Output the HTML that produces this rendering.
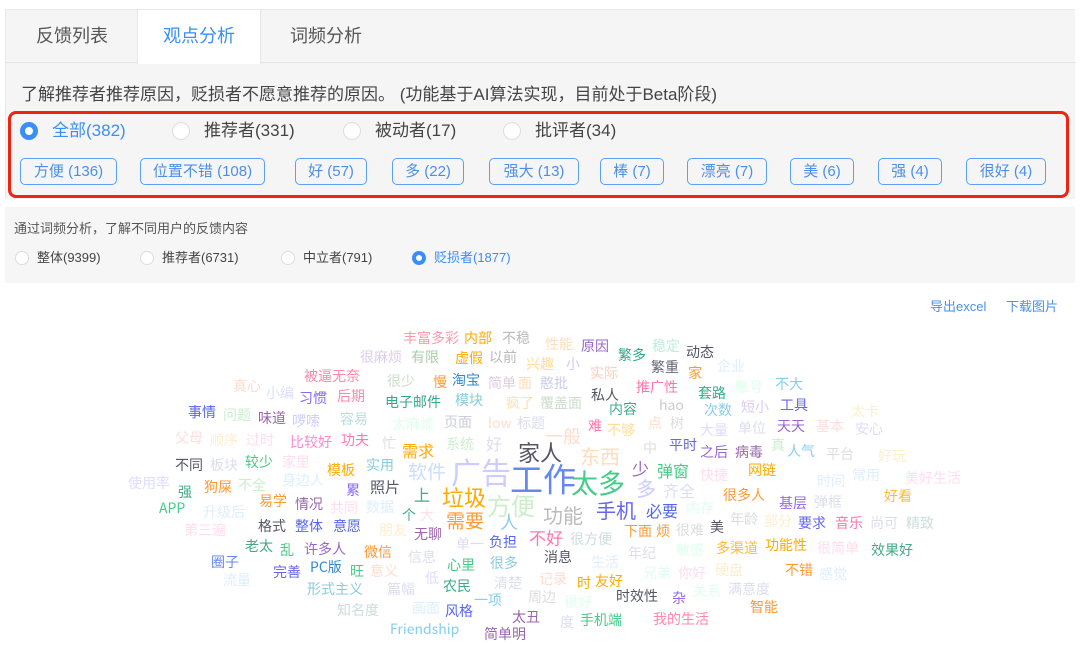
<!DOCTYPE html>
<html><head><meta charset="utf-8"><style>
*,*:before,*:after{margin:0;padding:0;box-sizing:border-box}
body{width:1080px;height:668px;background:#fff;font-family:"Liberation Sans","Noto Sans CJK SC",sans-serif;position:relative;overflow:hidden;color:#333}
.panel{position:absolute;left:5px;top:9px;width:1070px;height:190px;background:#f5f5f5;border-top:1px solid #e8e8e8;border-left:1px solid #e8e8e8}
.tabs{position:absolute;left:0;top:0;width:1070px;height:53px;border-bottom:1px solid #e6e6e6}
.tab{position:absolute;top:0;height:53px;line-height:53px;font-size:18px;color:#555;text-align:center}
.tab.act{background:#fff;color:#3a8ef6;border-left:1px solid #e6e6e6;border-right:1px solid #e6e6e6;height:54px}
.desc{position:absolute;left:15px;top:70px;font-size:17px;color:#444}
.red{position:absolute;left:8px;top:111px;width:1061px;height:87px;border:3px solid #f0230f;border-radius:8px}
.rad{position:absolute;top:121px;height:20px;font-size:17px;color:#444;line-height:20px;padding-left:32px}
.rad:before{content:"";position:absolute;left:0;top:1px;width:18px;height:18px;border:1px solid #ddd;border-radius:50%;background:#fff}
.rad.on{color:#3a8ef6}
.rad.on:before{border:5px solid #3a8ef6}
.tag{position:absolute;top:158px;height:27px;border:1px solid #5aa0f6;border-radius:5px;color:#4a90e8;font-size:15px;line-height:25px;text-align:center}
.p2{position:absolute;left:5px;top:207px;width:1070px;height:76px;background:#f6f6f6}
.p2 .t{position:absolute;left:9px;top:11px;font-size:13px;color:#555}
.r2{position:absolute;top:43px;font-size:13px;color:#444;padding-left:25px;line-height:16px}
.r2:before{content:"";position:absolute;left:3px;top:1px;width:14px;height:14px;border:1px solid #ddd;border-radius:50%;background:#fff}
.r2.on{color:#3a8ef6}.r2.on:before{border:4px solid #3a8ef6}
.lk{position:absolute;top:296px;font-size:13px;color:#4a90e8}
.c span{position:absolute;white-space:nowrap;line-height:1;font-size:14px;transform:translateY(-50%);font-family:"Noto Sans CJK SC","DejaVu Sans",sans-serif}
</style></head><body>
<div class="panel">
<div class="tabs">
<div class="tab" style="left:0;width:132px">反馈列表</div>
<div class="tab act" style="left:131px;width:124px">观点分析</div>
<div class="tab" style="left:255px;width:130px">词频分析</div>
</div>
<div class="desc">了解推荐者推荐原因，贬损者不愿意推荐的原因。 (功能基于AI算法实现，目前处于Beta阶段)</div>
</div>
<div class="red"></div>
<div class="rad on" style="left:20px">全部(382)</div>
<div class="rad" style="left:172px">推荐者(331)</div>
<div class="rad" style="left:343px">被动者(17)</div>
<div class="rad" style="left:503px">批评者(34)</div>
<div class="tag" style="left:20px;width:97px">方便 (136)</div>
<div class="tag" style="left:140px;width:125px">位置不错 (108)</div>
<div class="tag" style="left:295px;width:72px">好 (57)</div>
<div class="tag" style="left:392px;width:72px">多 (22)</div>
<div class="tag" style="left:489px;width:90px">强大 (13)</div>
<div class="tag" style="left:600px;width:64px">棒 (7)</div>
<div class="tag" style="left:687px;width:80px">漂亮 (7)</div>
<div class="tag" style="left:790px;width:64px">美 (6)</div>
<div class="tag" style="left:878px;width:64px">强 (4)</div>
<div class="tag" style="left:966px;width:80px">很好 (4)</div>
<div class="p2"><div class="t">通过词频分析，了解不同用户的反馈内容</div>
<div class="r2" style="left:7px">整体(9399)</div>
<div class="r2" style="left:132px">推荐者(6731)</div>
<div class="r2" style="left:273px">中立者(791)</div>
<div class="r2 on" style="left:404px">贬损者(1877)</div>
</div>
<div class="lk" style="left:930px">导出excel</div>
<div class="lk" style="left:1006px">下载图片</div>
<div class="c">
<span style="left:403px;top:338px;color:#f9a">丰富多彩</span>
<span style="left:464px;top:338px;color:#fa0">内部</span>
<span style="left:502px;top:338px;color:#bbb">不稳</span>
<span style="left:545px;top:344px;color:#fdb">性能</span>
<span style="left:581px;top:346px;color:#96c">原因</span>
<span style="left:618px;top:355px;color:#3a8">繁多</span>
<span style="left:652px;top:346px;color:#bed">稳定</span>
<span style="left:686px;top:352px;color:#556">动态</span>
<span style="left:360px;top:357px;color:#dce">很麻烦</span>
<span style="left:411px;top:357px;color:#aca">有限</span>
<span style="left:455px;top:358px;color:#fa0">虚假</span>
<span style="left:489px;top:357px;color:#bbb">以前</span>
<span style="left:526px;top:364px;color:#fd9">兴趣</span>
<span style="left:566px;top:364px;color:#ccf">小</span>
<span style="left:651px;top:367px;color:#667">繁重</span>
<span style="left:688px;top:373px;color:#f93">家</span>
<span style="left:717px;top:366px;color:#def">企业</span>
<span style="left:590px;top:373px;color:#fcb">实际</span>
<span style="left:304px;top:376px;color:#f8a">被逼无奈</span>
<span style="left:387px;top:381px;color:#cdc">很少</span>
<span style="left:433px;top:382px;color:#f93">慢</span>
<span style="left:452px;top:380px;color:#38c">淘宝</span>
<span style="left:488px;top:383px;color:#dcd">简单</span>
<span style="left:518px;top:383px;color:#fdb">面</span>
<span style="left:540px;top:383px;color:#cce">憨批</span>
<span style="left:591px;top:395px;color:#556">私人</span>
<span style="left:636px;top:387px;color:#f7a">推广性</span>
<span style="left:698px;top:393px;color:#3a8">套路</span>
<span style="left:735px;top:387px;color:#dfe">账号</span>
<span style="left:775px;top:384px;color:#8ce">不大</span>
<span style="left:233px;top:386px;color:#fdc">真心</span>
<span style="left:266px;top:393px;color:#ddf">小编</span>
<span style="left:299px;top:398px;color:#86f">习惯</span>
<span style="left:337px;top:396px;color:#f8a">后期</span>
<span style="left:385px;top:402px;color:#3a8">电子邮件</span>
<span style="left:455px;top:400px;color:#8cd">模块</span>
<span style="left:506px;top:403px;color:#fda">疯了</span>
<span style="left:540px;top:403px;color:#cdc">覆盖面</span>
<span style="left:609px;top:409px;color:#4a8">内容</span>
<span style="left:659px;top:405px;color:#ccc">hao</span>
<span style="left:704px;top:410px;color:#8ce">次数</span>
<span style="left:741px;top:407px;color:#dce">短小</span>
<span style="left:780px;top:405px;color:#66e">工具</span>
<span style="left:851px;top:411px;color:#fec">太卡</span>
<span style="left:188px;top:412px;color:#56e">事情</span>
<span style="left:223px;top:415px;color:#cec">问题</span>
<span style="left:258px;top:418px;color:#96a">味道</span>
<span style="left:292px;top:421px;color:#ccf">啰嗦</span>
<span style="left:340px;top:419px;color:#bdd">容易</span>
<span style="left:392px;top:424px;color:#dfe">太麻烦</span>
<span style="left:444px;top:422px;color:#ccd">页面</span>
<span style="left:488px;top:423px;color:#fdc">low</span>
<span style="left:517px;top:423px;color:#dde">标题</span>
<span style="left:588px;top:426px;color:#f7a">难</span>
<span style="left:607px;top:430px;color:#fd9">不够</span>
<span style="left:648px;top:423px;color:#fdc">点</span>
<span style="left:670px;top:423px;color:#ddd">树</span>
<span style="left:700px;top:430px;color:#ddf">大量</span>
<span style="left:738px;top:428px;color:#dde">单位</span>
<span style="left:777px;top:426px;color:#96c">天天</span>
<span style="left:816px;top:426px;color:#fdd">基本</span>
<span style="left:855px;top:429px;color:#ddf">安心</span>
<span style="left:175px;top:438px;color:#fdd">父母</span>
<span style="left:210px;top:440px;color:#fec">顺序</span>
<span style="left:246px;top:440px;color:#fde">过时</span>
<span style="left:290px;top:442px;color:#f8c">比较好</span>
<span style="left:341px;top:440px;color:#f7a">功夫</span>
<span style="left:382px;top:443px;color:#ddd">忙</span>
<span style="left:402px;top:450px;color:#fa0;font-size:16px">需求</span>
<span style="left:446px;top:444px;color:#cec">系统</span>
<span style="left:486px;top:443px;color:#dde;font-size:16px">好</span>
<span style="left:545px;top:436px;color:#fdc;font-size:18px">一般</span>
<span style="left:518px;top:452px;color:#556;font-size:22px">家人</span>
<span style="left:643px;top:448px;color:#ddd">中</span>
<span style="left:669px;top:445px;color:#66e">平时</span>
<span style="left:700px;top:452px;color:#96c">之后</span>
<span style="left:735px;top:452px;color:#96a">病毒</span>
<span style="left:771px;top:445px;color:#cec">真</span>
<span style="left:787px;top:451px;color:#8ce">人气</span>
<span style="left:826px;top:454px;color:#ddd">平台</span>
<span style="left:878px;top:456px;color:#fec">好玩</span>
<span style="left:175px;top:465px;color:#556">不同</span>
<span style="left:210px;top:465px;color:#dde">板块</span>
<span style="left:245px;top:462px;color:#4c8">较少</span>
<span style="left:282px;top:462px;color:#fde">家里</span>
<span style="left:327px;top:470px;color:#fa0">模板</span>
<span style="left:366px;top:465px;color:#8cd">实用</span>
<span style="left:408px;top:471px;color:#cdf;font-size:19px">软件</span>
<span style="left:451px;top:471px;color:#ccf;font-size:30px">广告</span>
<span style="left:510px;top:478px;color:#68e;font-size:33px">工作</span>
<span style="left:571px;top:482px;color:#4c8;font-size:27px">太多</span>
<span style="left:580px;top:456px;color:#fdb;font-size:20px">东西</span>
<span style="left:632px;top:468px;color:#96c;font-size:17px">少</span>
<span style="left:657px;top:470px;color:#4c8;font-size:16px">弹窗</span>
<span style="left:700px;top:475px;color:#fde">快捷</span>
<span style="left:748px;top:470px;color:#fa0">网链</span>
<span style="left:817px;top:481px;color:#def">时间</span>
<span style="left:852px;top:475px;color:#def">常用</span>
<span style="left:905px;top:478px;color:#fde">美好生活</span>
<span style="left:128px;top:483px;color:#ddf">使用率</span>
<span style="left:178px;top:492px;color:#4a8">强</span>
<span style="left:204px;top:487px;color:#f93">狗屎</span>
<span style="left:238px;top:485px;color:#cec">不全</span>
<span style="left:282px;top:480px;color:#def">身边人</span>
<span style="left:346px;top:490px;color:#86f">累</span>
<span style="left:370px;top:487px;color:#556;font-size:15px">照片</span>
<span style="left:414px;top:494px;color:#4a8;font-size:16px">上</span>
<span style="left:442px;top:497px;color:#fa0;font-size:22px">垃圾</span>
<span style="left:487px;top:505px;color:#cec;font-size:24px">方便</span>
<span style="left:636px;top:488px;color:#ccf;font-size:20px">多</span>
<span style="left:663px;top:490px;color:#ddf;font-size:16px">齐全</span>
<span style="left:723px;top:495px;color:#f93">很多人</span>
<span style="left:779px;top:503px;color:#96e">基层</span>
<span style="left:814px;top:502px;color:#dde">弹框</span>
<span style="left:884px;top:496px;color:#fb3">好看</span>
<span style="left:159px;top:508px;color:#4c8">APP</span>
<span style="left:203px;top:512px;color:#def">升级后</span>
<span style="left:259px;top:501px;color:#f93">易学</span>
<span style="left:295px;top:504px;color:#96a">情况</span>
<span style="left:330px;top:508px;color:#fde">共同</span>
<span style="left:366px;top:507px;color:#def">数据</span>
<span style="left:402px;top:515px;color:#4a8">个</span>
<span style="left:420px;top:515px;color:#fde">大</span>
<span style="left:446px;top:520px;color:#f93;font-size:19px">需要</span>
<span style="left:500px;top:522px;color:#8ce;font-size:18px">人</span>
<span style="left:543px;top:515px;color:#bbb;font-size:20px">功能</span>
<span style="left:596px;top:510px;color:#66e;font-size:20px">手机</span>
<span style="left:646px;top:510px;color:#56e;font-size:16px">必要</span>
<span style="left:686px;top:508px;color:#dfe">内存</span>
<span style="left:730px;top:519px;color:#ddd">年龄</span>
<span style="left:764px;top:521px;color:#fec">部分</span>
<span style="left:798px;top:523px;color:#66e">要求</span>
<span style="left:835px;top:523px;color:#f7a">音乐</span>
<span style="left:870px;top:523px;color:#dde">尚可</span>
<span style="left:906px;top:523px;color:#cdd">精致</span>
<span style="left:184px;top:530px;color:#fde">第三遍</span>
<span style="left:258px;top:526px;color:#556">格式</span>
<span style="left:295px;top:526px;color:#56e">整体</span>
<span style="left:333px;top:526px;color:#56e">意愿</span>
<span style="left:379px;top:530px;color:#fec">朋友</span>
<span style="left:414px;top:534px;color:#96a">无聊</span>
<span style="left:529px;top:537px;color:#f7a;font-size:17px">不好</span>
<span style="left:570px;top:539px;color:#cdd">很方便</span>
<span style="left:624px;top:531px;color:#f93">下面</span>
<span style="left:656px;top:531px;color:#f93">烦</span>
<span style="left:676px;top:530px;color:#ddd">很难</span>
<span style="left:710px;top:527px;color:#556">美</span>
<span style="left:628px;top:553px;color:#dde">年纪</span>
<span style="left:676px;top:550px;color:#dfe">敏感</span>
<span style="left:716px;top:548px;color:#fb3">多渠道</span>
<span style="left:765px;top:545px;color:#fa0">功能性</span>
<span style="left:817px;top:548px;color:#fde">很简单</span>
<span style="left:871px;top:550px;color:#4a8">效果好</span>
<span style="left:456px;top:544px;color:#dde">单一</span>
<span style="left:489px;top:542px;color:#56e">负担</span>
<span style="left:245px;top:546px;color:#4a8">老太</span>
<span style="left:280px;top:550px;color:#4c8">乱</span>
<span style="left:304px;top:549px;color:#96c">许多人</span>
<span style="left:364px;top:552px;color:#f93">微信</span>
<span style="left:408px;top:557px;color:#dde">信息</span>
<span style="left:544px;top:557px;color:#556">消息</span>
<span style="left:591px;top:562px;color:#def">生活</span>
<span style="left:211px;top:562px;color:#68e">圈子</span>
<span style="left:447px;top:565px;color:#4c8">心里</span>
<span style="left:490px;top:563px;color:#8cd">很多</span>
<span style="left:273px;top:572px;color:#66e">完善</span>
<span style="left:310px;top:567px;color:#38c">PC版</span>
<span style="left:350px;top:571px;color:#4c8">旺</span>
<span style="left:370px;top:571px;color:#fdc">意义</span>
<span style="left:425px;top:578px;color:#ddf">低</span>
<span style="left:443px;top:586px;color:#4a8">农民</span>
<span style="left:494px;top:583px;color:#dde">清楚</span>
<span style="left:539px;top:579px;color:#fdc">记录</span>
<span style="left:577px;top:583px;color:#fa0">时</span>
<span style="left:595px;top:581px;color:#fa0">友好</span>
<span style="left:643px;top:573px;color:#dfe">兄弟</span>
<span style="left:678px;top:573px;color:#fde">你好</span>
<span style="left:715px;top:570px;color:#fec">硬盘</span>
<span style="left:785px;top:570px;color:#f93">不错</span>
<span style="left:819px;top:574px;color:#def">感觉</span>
<span style="left:223px;top:580px;color:#def">流量</span>
<span style="left:307px;top:589px;color:#8cd">形式主义</span>
<span style="left:387px;top:589px;color:#dde">篇幅</span>
<span style="left:474px;top:600px;color:#8ce">一项</span>
<span style="left:528px;top:597px;color:#ddd">周边</span>
<span style="left:564px;top:602px;color:#dfe">很好</span>
<span style="left:616px;top:596px;color:#556">时效性</span>
<span style="left:672px;top:598px;color:#96e">杂</span>
<span style="left:693px;top:591px;color:#dfe">关系</span>
<span style="left:728px;top:589px;color:#dde">满意度</span>
<span style="left:750px;top:607px;color:#f93">智能</span>
<span style="left:337px;top:610px;color:#cdd">知名度</span>
<span style="left:412px;top:608px;color:#def">画面</span>
<span style="left:445px;top:611px;color:#56e">风格</span>
<span style="left:512px;top:617px;color:#96a">太丑</span>
<span style="left:390px;top:629px;color:#8ce">Friendship</span>
<span style="left:484px;top:634px;color:#96a">简单明</span>
<span style="left:560px;top:622px;color:#dde">度</span>
<span style="left:580px;top:620px;color:#4c8">手机端</span>
<span style="left:653px;top:619px;color:#f8a">我的生活</span>
</div>
</body></html>
